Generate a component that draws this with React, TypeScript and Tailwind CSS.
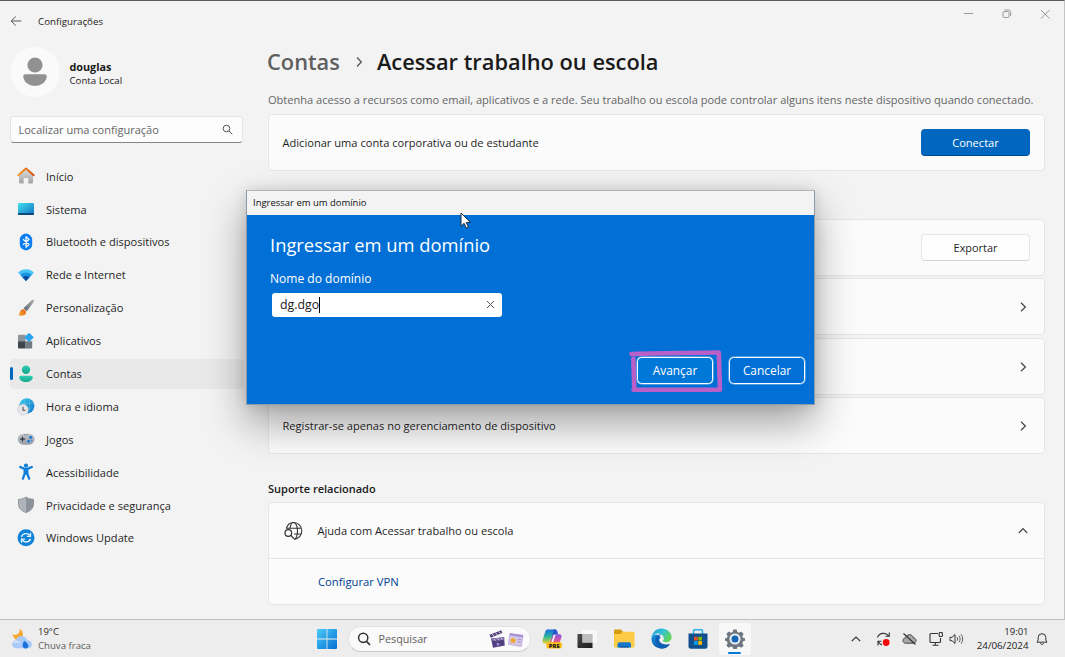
import type { ReactNode } from "react";

function Svg({ w, h, vb, children, className = "" }: { w: number; h: number; vb?: string; children: ReactNode; className?: string }) {
  return (
    <svg width={w} height={h} viewBox={vb ?? `0 0 ${w} ${h}`} fill="none" className={`block shrink-0 ${className}`}>
      {children}
    </svg>
  );
}

/* ---------- sidebar icons, drawn on an 18x18 grid ---------- */

const HomeIcon = () => (
  <Svg w={18} h={18}>
    <defs>
      <linearGradient id="hw" x1="0" y1="0" x2="0" y2="1"><stop stopColor="#dcdcdc" /><stop offset="1" stopColor="#a3a3a3" /></linearGradient>
      <linearGradient id="hr" x1="0" y1="0" x2="1" y2="0"><stop stopColor="#f59a23" /><stop offset="1" stopColor="#d8500f" /></linearGradient>
    </defs>
    <path d="M2 8.2 9 2.4l7 5.8v7.3a1 1 0 0 1-1 1h-3.7v-5.6H6.7v5.6H3a1 1 0 0 1-1-1z" fill="url(#hw)" />
    <path d="M1.3 8.2 9 1.6l7.7 6.6" stroke="url(#hr)" strokeWidth="2" strokeLinecap="round" strokeLinejoin="round" />
  </Svg>
);
const SystemIcon = () => (
  <Svg w={18} h={18}>
    <defs><linearGradient id="sy" x1="0" y1="0" x2="1" y2="1"><stop stopColor="#3fe0ea" /><stop offset="1" stopColor="#1272c4" /></linearGradient></defs>
    <rect x="1" y="3" width="16" height="12" rx="1" fill="url(#sy)" />
    <path d="M1 13h16v1a1 1 0 0 1-1 1H2a1 1 0 0 1-1-1z" fill="#0b4a78" />
  </Svg>
);
const BluetoothIcon = () => (
  <Svg w={18} h={18}>
    <rect x="2.8" y=".6" width="12.4" height="16.8" rx="6.2" fill="#0a7df2" />
    <path d="M6 6.3l6 5.2-3 2.7V3.8l3 2.7-6 5.2" stroke="#fff" strokeWidth="1.2" strokeLinejoin="round" />
  </Svg>
);
const WifiIcon = () => (
  <Svg w={18} h={18}>
    <path d="M1 6.5C5.2 2 12.8 2 17 6.5L9 15z" fill="#46c5f4" />
    <path d="M3.3 8.9C6.3 5.6 11.7 5.6 14.7 8.9L9 15z" fill="#1b92df" />
    <path d="M5.7 11.4C7.5 9.5 10.5 9.5 12.3 11.4L9 15z" fill="#0b4e9d" />
  </Svg>
);
const BrushIcon = () => (
  <Svg w={18} h={18}>
    <defs>
      <linearGradient id="bh" x1="0" y1="1" x2="1" y2="0"><stop stopColor="#5d646c" /><stop offset="1" stopColor="#a9b0b8" /></linearGradient>
      <linearGradient id="bt" x1="0" y1="1" x2="1" y2="0"><stop stopColor="#f7a928" /><stop offset="1" stopColor="#e4601b" /></linearGradient>
    </defs>
    <path d="M6.500 9.300 15 1c1.100-1 2.700.5 1.800 1.700L9.800 12.200z" fill="url(#bh)" />
    <path d="M1 15.700c1.800-.3 1.500-1.400 2-3 .5-2.100 2.900-3.300 4.900-1.800 2.100 1.600 1.400 4.400-.9 5.300-1.800.8-4.500.6-6-.5z" fill="url(#bt)" />
  </Svg>
);
const AppsIcon = () => (
  <Svg w={18} h={18}>
    <path d="M2 2.700h6.600v6.600H1V3.700a1 1 0 0 1 1-1z" fill="#8d949c" />
    <path d="M1 9.300h7.600v7.100H2a1 1 0 0 1-1-1z" fill="#41464d" />
    <path d="M8.600 9.300h6.600v6.100a1 1 0 0 1-1 1H8.600z" fill="#737b84" />
    <rect x="8.700" y="2" width="6.700" height="6.700" rx=".8" transform="rotate(45 12.050 5.350)" fill="#2aa3ee" />
  </Svg>
);
const AccountsIcon = () => (
  <Svg w={18} h={18}>
    <defs><linearGradient id="ac" x1="0" y1="0" x2="0" y2="1"><stop stopColor="#2fcfb3" /><stop offset="1" stopColor="#15a58c" /></linearGradient></defs>
    <circle cx="9" cy="4.700" r="4.200" fill="url(#ac)" />
    <path d="M4 10.700h10c1.200 0 1.900.8 1.800 1.900-.3 2.700-3 4.500-6.800 4.500s-6.500-1.800-6.800-4.500c-.1-1.100.6-1.900 1.800-1.900z" fill="url(#ac)" />
  </Svg>
);
const TimeIcon = () => (
  <Svg w={18} h={18}>
    <defs><linearGradient id="gl" x1="0" y1="0" x2="1" y2="1"><stop stopColor="#38cdec" /><stop offset="1" stopColor="#0d71c9" /></linearGradient></defs>
    <circle cx="9.800" cy="7.800" r="7.600" fill="url(#gl)" />
    <path d="M8 1v14M12.500 1.500v13M3 5.500h14M4 10.200h13" stroke="#fff" strokeOpacity=".22" strokeWidth=".7" />
    <circle cx="6" cy="11.700" r="5.400" fill="#e6e6e8" stroke="#bcbfc4" strokeWidth=".4" />
    <path d="M6 8.700V12.300h2.400" stroke="#4d5258" strokeWidth="1.100" />
  </Svg>
);
const GamesIcon = () => (
  <Svg w={18} h={18}>
    <defs><linearGradient id="gp" x1="0" y1="0" x2="0" y2="1"><stop stopColor="#bfc4ca" /><stop offset="1" stopColor="#979ea6" /></linearGradient></defs>
    <rect x=".8" y="2.700" width="16.800" height="11" rx="5.400" fill="url(#gp)" />
    <path d="M5.500 5.800v4.800M3.100 8.200h4.800" stroke="#32373d" strokeWidth="1.200" />
    <circle cx="13.600" cy="6.300" r="1.500" fill="#1377d0" /><circle cx="11.600" cy="10.300" r="1.400" fill="#1377d0" />
    <circle cx="14.600" cy="9.400" r=".8" fill="#2b8ddb" /><path d="M7.400 3.800h1M9.600 3.800h1" stroke="#555" strokeWidth=".8" />
  </Svg>
);
const AccessIcon = () => (
  <Svg w={18} h={18}>
    <circle cx="9" cy="2.600" r="2.100" fill="#0e80dc" />
    <path d="M3.200 4 7.500 5.900h3L14.800 4M9 5.900v4.600M7.700 6.200v4.500L5.900 15.700M10.300 6.200v4.500L12.100 15.700" stroke="#0e80dc" strokeWidth="2.300" strokeLinecap="round" strokeLinejoin="round" />
  </Svg>
);
const ShieldIcon = () => (
  <Svg w={18} h={18}>
    <path d="M9 1c2.300 1.600 4.700 2.200 7.500 2.300v4.800c0 4.200-2.700 6.600-7.500 8.500z" fill="#8b9299" />
    <path d="M9 1C6.700 2.600 4.300 3.200 1.500 3.300v4.800c0 4.200 2.700 6.600 7.500 8.500z" fill="#afb4ba" />
    <path d="M9 1c2.300 1.600 4.700 2.200 7.500 2.300v4.800c0 4.200-2.700 6.600-7.500 8.500-4.800-1.900-7.500-4.300-7.500-8.500V3.300C4.300 3.200 6.700 2.600 9 1z" stroke="#858c93" strokeWidth=".8" />
  </Svg>
);
const UpdateIcon = () => (
  <Svg w={18} h={18}>
    <circle cx="9" cy="8.800" r="8.500" fill="#0f82da" />
    <path d="M4.500 7.900C5.500 4.200 10.600 3.400 13 6.700M13.500 9.700c-1 3.700-6.100 4.500-8.500 1.200" stroke="#e9f6ff" strokeWidth="1.400" />
    <path d="M13.500 3.800v3.600H9.900M4.500 13.800v-3.600h3.600" stroke="#e9f6ff" strokeWidth="1.300" />
  </Svg>
);

const nav: { label: string; icon: () => ReactNode; active?: boolean }[] = [
  { label: "Início", icon: HomeIcon },
  { label: "Sistema", icon: SystemIcon },
  { label: "Bluetooth e dispositivos", icon: BluetoothIcon },
  { label: "Rede e Internet", icon: WifiIcon },
  { label: "Personalização", icon: BrushIcon },
  { label: "Aplicativos", icon: AppsIcon },
  { label: "Contas", icon: AccountsIcon, active: true },
  { label: "Hora e idioma", icon: TimeIcon },
  { label: "Jogos", icon: GamesIcon },
  { label: "Acessibilidade", icon: AccessIcon },
  { label: "Privacidade e segurança", icon: ShieldIcon },
  { label: "Windows Update", icon: UpdateIcon },
];

const Chevron = ({ up = false }: { up?: boolean }) => (
  <Svg w={12} h={12} className={up ? "mr-px -rotate-90" : "mr-px"}>
    <path d="M4 1.800 8.400 6 4 10.200" stroke="#444" strokeWidth="1.200" />
  </Svg>
);

function Sidebar() {
  return (
    <aside className="flex w-[268px] shrink-0 flex-col">
      <div className="flex h-[40px] items-center pl-[10px]">
        <Svg w={12} h={12}>
          <path d="M11.300 6H1.200M5.800 1.500 1.200 6l4.600 4.500" stroke="#555" strokeWidth="1" />
        </Svg>
        <h1 className="ml-4 pt-px text-[9.750px] leading-4 text-[#1c1c1c]">Configurações</h1>
      </div>
      <div className="mt-[6px] flex h-[50px] items-center pl-[10px]">
        <div className="flex h-[50px] w-[50px] items-center justify-center rounded-full bg-[#fafafa]">
          <Svg w={26} h={30}>
            <circle cx="13" cy="8" r="7.600" fill="#919191" />
            <path d="M3.400 17.300h19.200c1.500 0 2.200.9 2.100 2.200-.5 5.600-5.300 9.300-11.700 9.300S1.800 25.100 1.300 19.500c-.1-1.300.6-2.200 2.100-2.200z" fill="#919191" />
          </Svg>
        </div>
        <div className="ml-[9.500px] pt-[4.500px]">
          <div className="text-[10.800px] font-bold leading-[14.500px] text-[#1a1a1a]">douglas</div>
          <div className="text-[9.700px] leading-[14.500px] text-[#1a1a1a]">Conta Local</div>
        </div>
      </div>
      <div className="ml-[10px] mt-[19px] flex h-[27px] w-[233px] items-center justify-between rounded-[4px] border border-[#e4e4e4] border-b-[#868686] bg-[#fcfcfc] pl-[7.500px] pr-[9px]">
        <span className="text-[11px] leading-4 text-[#666]">Localizar uma configuração</span>
        <Svg w={11} h={11}>
          <circle cx="4.500" cy="4.500" r="3.300" stroke="#555" /><path d="m7 7 3.300 3.300" stroke="#555" />
        </Svg>
      </div>
      <nav className="mt-[17px] flex flex-col">
        {nav.map(({ label, icon: Icon, active }) => (
          <div key={label} className="flex h-[32.900px] items-center pl-[10px]">
            <div className={`flex h-[30px] w-[234px] items-center rounded-[4px] ${active ? "bg-[#e9e9e9]" : ""}`}>
              <div className={`mr-[4.500px] h-[13px] w-[2.500px] rounded-full ${active ? "bg-[#0067c0]" : ""}`} />
              <Icon />
              <span className="ml-[11px] whitespace-nowrap pt-[.5px] text-[11.080px] leading-4 text-[#1f1f1f]">{label}</span>
            </div>
          </div>
        ))}
      </nav>
    </aside>
  );
}

const card = "flex shrink-0 items-center rounded-[4px] border border-[#e6e6e6] bg-[#fbfbfb] px-[13.500px] text-[11.100px] text-[#1f1f1f]";

function Main() {
  return (
    <main className="flex w-[776.500px] shrink-0 flex-col">
      <div className="-mr-[20px] flex h-[26px] items-center justify-end">
        <Svg w={90} h={14} className="mr-[12.500px]">
          <path d="M2 6.500h9" stroke="#999" />
          <rect x="41" y="4.500" width="6" height="6" rx="1.200" stroke="#999" />
          <path d="M42.500 3h4.300c1.200 0 1.800.8 1.800 1.800V9" stroke="#999" />
          <path d="m79 3 8.500 8.500M87.500 3 79 11.500" stroke="#999" />
        </Svg>
      </div>
      <div className="-ml-[1px] flex h-[70px] items-center text-[21.820px] font-semibold leading-7">
        <span className="text-[#5f5f5f]">Contas</span>
        <Svg w={12} h={12} className="ml-[13px] mr-[12px]"><path d="M4 1.500 8.300 6 4 10.500" stroke="#5a5a5a" strokeWidth="1.400" /></Svg>
        <h2 className="whitespace-nowrap text-[#1a1a1a]">Acessar trabalho ou escola</h2>
      </div>
      <p className="-mt-[5px] h-[16px] whitespace-nowrap text-[11.070px] leading-4 text-[#666]">
        Obtenha acesso a recursos como email, aplicativos e a rede. Seu trabalho ou escola pode controlar alguns itens neste dispositivo quando conectado.
      </p>
      <section className={`${card} mt-[6px] h-[57px] justify-between`}>
        <span className="pt-[1.500px]">Adicionar uma conta corporativa ou de estudante</span>
        <button className="h-[27px] w-[109px] rounded-[4px] border-b border-[#004a8b] bg-[#0067c0] pt-[2px] text-white">Conectar</button>
      </section>
      <section className={`${card} mt-[48px] h-[57px] justify-end`}>
        <button className="h-[27px] w-[109px] rounded-[4px] border border-[#e6e6e6] border-b-[#d4d4d4] bg-[#fefefe] pt-[2px] text-[10.900px]">Exportar</button>
      </section>
      <section className={`${card} mt-[2px] h-[57px] justify-end`}><Chevron /></section>
      <section className={`${card} mt-[3px] h-[57px] justify-end`}><Chevron /></section>
      <section className={`${card} mt-[2px] h-[57px] justify-between`}>
        <span className="pt-[1.500px]">Registrar-se apenas no gerenciamento de dispositivo</span>
        <Chevron />
      </section>
      <h3 className="mt-[26.500px] h-4 text-[11px] font-semibold leading-4 text-[#1a1a1a]">Suporte relacionado</h3>
      <section className={`${card} mt-[5.500px] h-[57px] rounded-b-none`}>
        <Svg w={20} h={20}>
          <path d="M3.300 7.500C4.400 4 7.200 1.500 10.500 1.500c4.700 0 8.300 3.800 8.300 8.500 0 4.200-3 7.600-7 8.300M3 7.300h15.300M11 13h7.300" stroke="#333" strokeWidth="1.100" />
          <path d="M7 7.300C7.600 3.600 9 1.500 10.500 1.500c2.300 0 4 4 4 8.500s-1.500 8.300-3.500 8.500" stroke="#333" strokeWidth="1.100" />
          <circle cx="5.300" cy="12" r="3.300" stroke="#333" strokeWidth="1.200" /><path d="m7.800 14.400 3.500 3.500" stroke="#333" strokeWidth="1.300" />
        </Svg>
        <span className="ml-[15px] flex-1 pt-[1.500px]">Ajuda com Acessar trabalho ou escola</span>
        <Chevron up />
      </section>
      <section className={`${card} -mt-px h-[47px] rounded-t-none`}>
        <a className="ml-[35.500px] pt-[1.500px] text-[11.250px] text-[#003e92]">Configurar VPN</a>
      </section>
    </main>
  );
}

function Dialog() {
  const btn = "flex h-[27px] w-[76px] items-center justify-center rounded-[4.500px] border-[1.500px] border-white ring-[.5px] ring-white/60 text-[11.900px] text-white";
  return (
    <div className="absolute left-[246px] top-[190px] flex h-[215px] w-[569px] flex-col border border-[#8f9ba6] border-t-[#b5b5b5] bg-[#0070d6] shadow-[0_18px_38px_rgba(0,0,0,0.36),0_0_12px_rgba(0,0,0,0.12)]">
      <div className="flex h-[24px] shrink-0 items-center bg-[#f3f3f3] pl-[6px] text-[9.470px] leading-4 text-[#111]">Ingressar em um domínio</div>
      <div className="flex flex-1 flex-col pl-[23px] text-white">
        <h2 className="mt-[17px] h-[26px] text-[18.370px] leading-[26px]">Ingressar em um domínio</h2>
        <label className="mt-[13px] h-4 text-[12.040px] leading-4">Nome do domínio</label>
        <div className="ml-[1.500px] mt-[5.500px] flex h-[24px] w-[230px] items-center rounded-[3px] bg-white pl-[8.500px] pr-[7px]">
          <span className="text-[12.350px] leading-4 text-[#222]">dg.dgo</span>
          <span className="h-[16px] w-px bg-black" />
          <Svg w={9} h={9} className="ml-auto"><path d="m1 1 7 7M8 1 1 8" stroke="#555" /></Svg>
        </div>
        <div className="mt-[40.500px] flex gap-4 pl-[367px]">
          <div className="relative">
            <div className={`${btn} bg-[#0078d8]`}>Avançar</div>
            <svg width="94" height="44" viewBox="0 0 94 44" fill="none" className="absolute -left-[8px] -top-[8px]">
              <path d="M2.500 5C30 4.400 60 3.700 89.500 3.500M4.300 9.700 5.300 40.300" stroke="#b95fc8" strokeWidth="4.600" strokeLinecap="round" />
              <path d="M4.500 40.700H91L89.800 3.700" stroke="#b95fc8" strokeWidth="4.600" strokeLinecap="round" strokeLinejoin="round" />
            </svg>
          </div>
          <div className={btn}>Cancelar</div>
        </div>
      </div>
    </div>
  );
}

function Taskbar() {
  return (
    <footer className="flex h-[38px] shrink-0 items-center border-t border-[#bfbfbf] bg-[#ededed]">
      <div className="flex w-[317px] shrink-0 items-center pl-[11px]">
        <Svg w={22} h={22}>
          <path d="M8.500.8c2.800 1.600 4 4.200 3.200 7.500-1 3-4.500 4.300-7.500 3L1 6.500c3 1 5.500.3 6.800-1.500.9-1.200 1.100-2.700.7-4.200z" fill="#f6a72c" />
          <path d="M5.500 20.200C2.800 20.200 1 18.500 1 16.200c0-2.300 1.700-3.900 3.800-4C5.500 9.500 7.900 8 10.600 8c2.900 0 5 1.700 5.700 4.300 2.700.1 4.700 1.800 4.700 4.100 0 2.200-1.800 3.800-4.400 3.800z" fill="#a9c9f7" />
          <path d="M3 14.500c2-1.500 4.600-1 6 .5" stroke="#dceafd" strokeWidth="1.500" />
          <path d="M14.300 12.500c1.900 2.300 2.800 3.700 2.800 5.200a2.800 2.800 0 0 1-5.600 0c0-1.500.9-2.900 2.800-5.200z" fill="#1b6fdb" transform="rotate(-15 14.300 17)" />
        </Svg>
        <div className="ml-[5px] text-[#2a2a2a]">
          <div className="text-[9.500px] leading-[13.300px]">19°C</div>
          <div className="text-[9.620px] leading-[13.300px] text-[#5c5c5c]">Chuva fraca</div>
        </div>
      </div>
      <Svg w={20} h={20}>
        <defs><linearGradient id="wn" x1="0" y1="0" x2="20" y2="20" gradientUnits="userSpaceOnUse"><stop stopColor="#4cc9f9" /><stop offset="1" stopColor="#0371d2" /></linearGradient></defs>
        <path d="M1 0h8.600v9.600H0V1a1 1 0 0 1 1-1zM10.400 0H19a1 1 0 0 1 1 1v8.600h-9.600zM0 10.400h9.600V20H1a1 1 0 0 1-1-1zM10.400 10.400H20V19a1 1 0 0 1-1 1h-8.600z" fill="url(#wn)" />
      </Svg>
      <div className="ml-[11px] flex h-[26px] w-[183px] shrink-0 items-center rounded-full border border-[#e2e2e2] border-b-[#cacaca] bg-[#fafafa] pl-[8px]">
        <Svg w={14} h={14}><circle cx="6.200" cy="5.800" r="4.600" stroke="#333" strokeWidth="1.500" /><path d="m9.500 9.300 3.500 3.700" stroke="#333" strokeWidth="1.700" /></Svg>
        <span className="ml-[7.500px] text-[10.750px] leading-4 text-[#606060]">Pesquisar</span>
        <Svg w={36} h={20} className="ml-auto mr-[6px]">
          <path d="m3 9.500 13-1.200.8 8.300L5 18.700z" fill="#51407f" />
          <path d="m1.500 5.800 11.800-4.600 1 2.800L2.700 8.700z" fill="#54437e" />
          <path d="m4 5 2.300 2.200M7.300 3.700l2.300 2.200M10.600 2.400l2.200 2.200" stroke="#dcd3ee" strokeWidth="1" />
          <path d="m3.200 9.500 13-1.200.2 2.300-12.800 1.300z" fill="#8570ad" /><path d="m6 9.600 1.500 2.200M9.500 9.300l1.500 2.200M13 8.900l1.500 2.200" stroke="#e4def2" strokeWidth=".8" />
          <path d="m8.500 13.500 3.800 1.500-3.300 2.200z" fill="#a58dd1" />
          <path d="m22 4.500 13 1.700-1.700 11.300-12.800-2.200z" fill="#d3c7e8" stroke="#b7a6d6" strokeWidth=".8" />
          <path d="m22 4.500 13 1.700-.3 2-13-1.900z" fill="#a48bd0" />
          <path d="m25 8 1.200 2.200 2.300.5-1.700 1.600.2 2.300-2.100-1-2.200.7.500-2.300-1.300-1.900 2.300-.1z" fill="#f5a62a" />
          <path d="m30 10.200 3 .4M29.700 12.700l3 .4" stroke="#a48bd0" />
        </Svg>
      </div>
      {/* Copilot */}
      <Svg w={20} h={20} className="ml-[10.500px]">
        <defs>
          <linearGradient id="c1" x1="0" y1="0" x2="0" y2="1"><stop stopColor="#1d6fe0" /><stop offset=".5" stopColor="#2bb59b" /><stop offset="1" stopColor="#e9d22a" /></linearGradient>
          <linearGradient id="c2" x1="0" y1="0" x2="0" y2="1"><stop stopColor="#8a55e8" /><stop offset=".5" stopColor="#d5569f" /><stop offset="1" stopColor="#f08a3c" /></linearGradient>
        </defs>
        <path d="M6 .5h7.500L9.700 12.700c-.4 1.200-1 1.800-2.200 1.800H2.800C.8 14.500.2 13 .6 11.300L3.200 2.700C3.700 1.100 4.600.5 6 .5z" fill="url(#c1)" />
        <path d="M12.500 5.300h4.700c2 0 2.700 1.300 2.200 3l-2.300 6.800c-.5 1.500-1.400 2.200-2.800 2.200H7l3-9.800c.5-1.500 1.200-2.200 2.500-2.200z" fill="url(#c2)" />
        <path d="M11.700 5.800h1.900L11 13.800c-.3.700-.7 1-1.500 1H8.200c.6-.4.9-.8 1.200-1.600z" fill="#f4eef8" />
        <path d="M11.500.5h1.300c1.300 0 2 .5 2.400 1.700l.9 3.100h-3.600c-.9 0-1.500.4-2 1.200z" fill="#2456c9" />
        <rect x="4.300" y="13.200" width="15.700" height="6.300" rx="2" fill="#f9bd18" />
        <text x="12.200" y="18.500" textAnchor="middle" fill="#222" className="font-['Open_Sans'] text-[5.800px] font-extrabold">PRE</text>
      </Svg>
      {/* Task view */}
      <Svg w={20} h={20} className="ml-[15.500px]">
        <defs><linearGradient id="tv" x1="0" y1="0" x2="1" y2="1"><stop stopColor="#4a4a4a" /><stop offset="1" stopColor="#1d1d1d" /></linearGradient></defs>
        <path d="M.5 5h15v14H1.300a1 1 0 0 1-.8-1z" fill="url(#tv)" />
        <path d="M5.500 1H19a1 1 0 0 1 1 1v11.500H5.500z" fill="#f9f9f9" fillOpacity=".9" />
        <path d="M5.500 5h10v8.500h-10z" fill="#bdbdbd" />
      </Svg>
      {/* Explorer */}
      <Svg w={21} h={20} className="ml-[16.500px]">
        <path d="M0 1.500a1 1 0 0 1 1-1h6l2 2.200L7.500 5H0z" fill="#d99a0d" />
        <path d="M0 4.900h6.500L9 2.700h10.500a1 1 0 0 1 1 1v13.800a1 1 0 0 1-1 1H1a1 1 0 0 1-1-1z" fill="#fdcb45" />
        <path d="M3.500 18.500v-3.200a2 2 0 0 1 2-2H15a2 2 0 0 1 2 2v3.200z" fill="#1578cf" /><path d="M5.500 17H15v1.500H5.500z" fill="#0d5ba8" />
      </Svg>
      {/* Edge */}
      <Svg w={21} h={21} className="ml-[16px]">
        <defs>
          <linearGradient id="e1" x1="0" y1="0" x2="1" y2=".5"><stop stopColor="#1b9de2" /><stop offset=".55" stopColor="#35c1d0" /><stop offset="1" stopColor="#60d75a" /></linearGradient>
          <linearGradient id="e2" x1="0" y1="0" x2=".8" y2="1"><stop stopColor="#1791dc" /><stop offset="1" stopColor="#0c4f9f" /></linearGradient>
        </defs>
        <path d="M.4 10.500a10.100 10.100 0 0 0 18.500 5.500c-6 3-10.500.5-10.700-3.200-.1-1.500.6-2.600 1.600-3.500C6 4.700 1.300 6.500.4 10.500z" fill="url(#e2)" />
        <path d="M.4 10C.8 4.500 5.200.4 10.500.4c5.700 0 10.100 4.200 10.100 8.600 0 3.300-2.500 5.200-5.400 5.200-2.300 0-3.500-.8-3.200-1.500 1.500-1.800.8-4.200-1-5.700C7 4 1.800 5.400.4 10z" fill="url(#e1)" />
        <path d="M4.800 12C4.600 8.800 7 6.700 9.800 6.300 7.500 8 6.900 11 8.500 13.500c2 3 6.300 3.600 10.400 2.500-2 3-5 4.600-8.400 4.600-3-.8-5.500-4.600-5.700-8.600z" fill="#0d5fb4" />
      </Svg>
      {/* Store */}
      <Svg w={20} h={20} className="ml-[16px]">
        <path d="M5.500 5V2A1.500 1.500 0 0 1 7 .7h6A1.500 1.500 0 0 1 14.500 2v3" stroke="#2bb0ea" strokeWidth="1.500" />
        <path d="M.5 4.500h19v12.700a2.500 2.500 0 0 1-2.500 2.500H3a2.500 2.500 0 0 1-2.500-2.500z" fill="#124f8e" />
        <path d="M6 7.800h3.700v3.700H6z" fill="#f25022" /><path d="M10.300 7.800H14v3.700h-3.700z" fill="#7fba00" />
        <path d="M6 12.100h3.700v3.700H6z" fill="#00a4ef" /><path d="M10.300 12.100H14v3.700h-3.700z" fill="#ffb900" />
      </Svg>
      {/* Settings */}
      <div className="ml-[11px] flex h-[32px] w-[32px] shrink-0 flex-col items-center rounded-[3px] bg-[#f8f8f8] pt-[6px]">
        <Svg w={20} h={20}>
          <path d="M8.300.5h3.400l.6 2.500 1.800.8 2.200-1.300 2.400 2.400-1.400 2.200.8 1.800 1.900.4v2.500l-1.900.5-.8 1.900 1.400 2.200-2.400 2.400-2.300-1.400-1.700.8-.6 2.300H8.300l-.6-2.300-1.700-.8-2.300 1.400-2.400-2.400 1.400-2.200-.8-1.900-1.900-.5V9.300l1.900-.4.8-1.800L1.300 4.900l2.400-2.400 2.200 1.300 1.800-.8z" fill="#6e7780" />
          <circle cx="10" cy="10" r="5.600" fill="#e9edf1" /><circle cx="10" cy="10" r="3.500" fill="#1766b5" />
        </Svg>
        <div className="mt-[3px] h-[2.500px] w-[13px] rounded-full bg-[#0078d4]" />
      </div>
      <div className="ml-auto flex items-center pr-[17.500px]">
        <Svg w={10} h={8}><path d="M.8 6.200 5 2l4.200 4.200" stroke="#333" strokeWidth="1.200" /></Svg>
        <Svg w={16} h={16} className="ml-[14.500px]">
          <path d="M1.500 6.500C3 1.800 9.500.8 12.800 5M13.300 1.500V5.300H9.500M2 14.500v-4.300h3.600M2.200 10.500c.8 1.700 2.100 2.900 3.800 3.400" stroke="#333" strokeWidth="1.100" />
          <circle cx="10.200" cy="11.500" r="3.400" fill="#f60b0b" />
        </Svg>
        <Svg w={15} h={14} className="ml-[10.500px]">
          <path d="M3.800 11.200C2 11.200 1 10 1 8.500S2 5.900 3.700 5.900C4.100 3.700 5.700 2.700 7.500 2.700s3.400 1 3.800 3.200c1.700 0 2.700 1.200 2.700 2.600s-1 2.700-2.800 2.700z" fill="#a8a8a8" stroke="#444" />
          <path d="m1.500 1.500 12 11" stroke="#333" strokeWidth="1.200" />
        </Svg>
        <Svg w={15} h={16} className="ml-[11.500px]">
          <path d="M9 2.500H2a1 1 0 0 0-1 1v7a1 1 0 0 0 1 1h8.500a1 1 0 0 0 1-1V7M6.300 11.500V14M3.500 14.200h6" stroke="#333" strokeWidth="1.100" />
          <rect x="10.200" y="1.500" width="3.200" height="4" rx=".8" stroke="#333" strokeWidth="1.100" />
        </Svg>
        <Svg w={15} h={14} className="ml-[5px]">
          <path d="M1 5.300h2L6 2.500v9L3 8.700H1z" stroke="#333" strokeLinejoin="round" />
          <path d="M8 5.200c.8 1.100.8 2.500 0 3.600M10 3.800c1.500 2 1.500 4.400 0 6.400M12 2.300c2.200 2.900 2.200 6.500 0 9.400" stroke="#444" strokeWidth=".9" />
        </Svg>
        <div className="ml-[13px] text-right text-[9.750px] leading-[13.300px] text-[#222]">
          <div className="text-[9.500px]">19:01</div>
          <div>24/06/2024</div>
        </div>
        <Svg w={12} h={14} className="ml-[7px]">
          <path d="M1 10.200 2.200 8V5.500a3.800 3.800 0 0 1 7.600 0V8L11 10.200zM4.500 11c.2 1 .8 1.500 1.500 1.500S7.300 12 7.500 11" stroke="#333" strokeLinejoin="round" />
        </Svg>
      </div>
    </footer>
  );
}

export default function App() {
  return (
    <div className="relative flex h-[657px] w-[1065px] flex-col overflow-hidden bg-[#f3f3f3] font-['Open_Sans','Noto_Sans',sans-serif]">
      <div className="flex h-[619px] shrink-0 border-r border-t border-r-[#c4c4c4] border-t-[#5a5a5a]">
        <Sidebar />
        <Main />
      </div>
      <Taskbar />
      <Dialog />
      <svg width="13" height="19" viewBox="0 0 13 19" className="absolute left-[460px] top-[212px]">
        <path d="M1 1v13.200l3.100-2.900 2.200 4.800 2.100-1-2.200-4.700h4.300z" fill="#fff" stroke="#1c2b3c" strokeWidth="1" />
      </svg>
    </div>
  );
}
